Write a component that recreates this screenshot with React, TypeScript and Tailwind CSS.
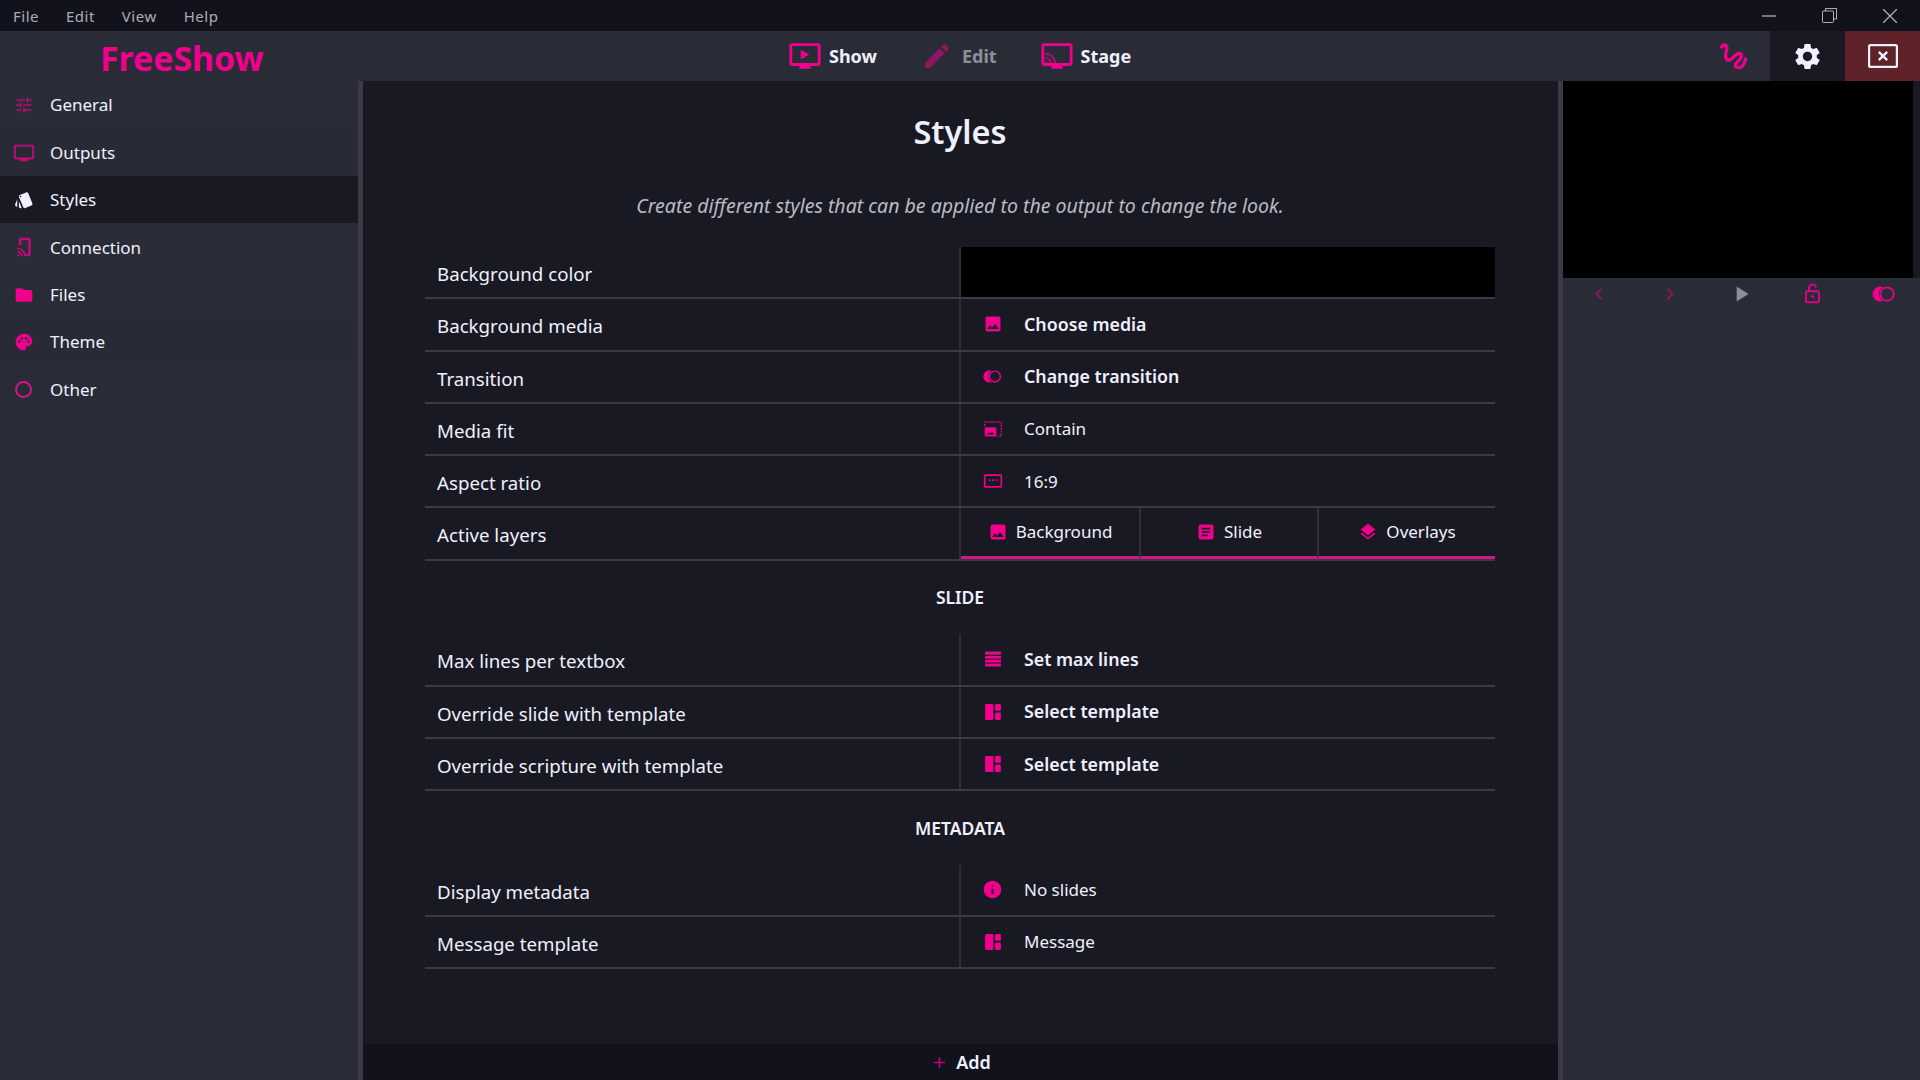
import type { ReactNode } from 'react';
import {
  MdTune, MdStyle, MdFolder, MdPalette, MdSettings, MdImage, MdArticle, MdLayers, MdInfo,
  MdChevronLeft, MdChevronRight, MdPlayArrow, MdEdit, MdAdd,
} from 'react-icons/md';

// iconos que no estan en el paquete, dibujados a mano
const TvIcon = ({ size = 24 }: { size?: number }) => (
  <svg width={size} height={size} viewBox="0 0 24 24" fill="currentColor">
    <path d="M21 3H3a2 2 0 0 0-2 2v12a2 2 0 0 0 2 2h5v2h8v-2h5a2 2 0 0 0 2-2V5a2 2 0 0 0-2-2zm0 14H3V5h18v12z" />
  </svg>
);

const ShowIcon = ({ size = 30 }: { size?: number }) => (
  <svg width={size} height={size} viewBox="0 0 24 24" fill="currentColor">
    <path d="M21 3H3a2 2 0 0 0-2 2v12a2 2 0 0 0 2 2h5v2h8v-2h5a2 2 0 0 0 2-2V5a2 2 0 0 0-2-2zm0 14H3V5h18v12z" />
    <path d="M9 7.5v7l6-3.5z" />
  </svg>
);

const StageIcon = ({ size = 30 }: { size?: number }) => (
  <svg width={size} height={size} viewBox="0 0 24 24" fill="currentColor">
    <path d="M21 3H3a2 2 0 0 0-2 2v12a2 2 0 0 0 2 2h5v2h8v-2h5a2 2 0 0 0 2-2V5a2 2 0 0 0-2-2zm0 14H3V5h18v12z" />
    <g opacity="0.6">
      <path d="M3.5 15.500v2h2a2 2 0 0 0-2-2z" />
      <path d="M3.500 12.500V14a3.500 3.500 0 0 1 3.500 3.500h1.500a5 5 0 0 0-5-5z" />
      <path d="M3.500 9.500V11a6.500 6.500 0 0 1 6.500 6.500h1.500a8 8 0 0 0-8-8z" />
    </g>
  </svg>
);

const ConnectionIcon = ({ size = 20 }: { size?: number }) => (
  <svg width={size} height={size} viewBox="0 0 24 24" fill="currentColor">
    <path d="M8 1h10a2 2 0 0 1 2 2v18a2 2 0 0 1-2 2h-4v-2.800h3.200V3.800H8.800V10H6V3a2 2 0 0 1 2-2z" />
    <path d="M4 20.500a2 2 0 0 1 2 2.500H4z" />
    <path d="M4 16.500a6 6 0 0 1 6 6.500H8a4 4 0 0 0-4-4.500z" />
    <path d="M4 12.500A10 10 0 0 1 14 23h-2a8 8 0 0 0-8-8.500z" />
  </svg>
);

const TransitionIcon = ({ size = 20 }: { size?: number }) => (
  <svg width={size} height={size} viewBox="0 0 24 24" fill="currentColor">
    <path d="M11.070 5.490A7 7 0 1 0 11.070 18.510A7.500 7.500 0 0 1 11.070 5.490z" />
    <circle cx="14.800" cy="12" r="6.200" fill="none" stroke="currentColor" strokeWidth="1.600" />
  </svg>
);

const ContainIcon = ({ size = 20 }: { size?: number }) => (
  <svg width={size} height={size} viewBox="0 0 24 24" fill="currentColor">
    <path d="M2 8V3.500H22V20.500H17.500" fill="none" stroke="currentColor" strokeWidth="1.800" strokeDasharray="2 1.500" />
    <path fillRule="evenodd" d="M2 10h14v11H2zm2.500 8.500h9l-2.700-3.500-2.200 2.600-1.600-1.500z" />
  </svg>
);

const RatioIcon = ({ size = 20 }: { size?: number }) => (
  <svg width={size} height={size} viewBox="0 0 24 24" fill="currentColor">
    <path d="M21 4H3a2 2 0 0 0-2 2v12a2 2 0 0 0 2 2h18a2 2 0 0 0 2-2V6a2 2 0 0 0-2-2zm0 14H3V6h18v12z" />
    <path d="M7 10h2v2H7zM11 10h2v2h-2zM15 10h2v2h-2z" />
  </svg>
);

const LinesIcon = ({ size = 20 }: { size?: number }) => (
  <svg width={size} height={size} viewBox="0 0 24 24" fill="currentColor">
    <path d="M2.500 3h19v4h-19zM2.500 8.500h19v3.200h-19zM2.500 13h19v3.200h-19zM2.500 17.500h19v3.500h-19z" />
  </svg>
);

const TemplateIcon = ({ size = 20 }: { size?: number }) => (
  <svg width={size} height={size} viewBox="0 0 24 24" fill="currentColor">
    <rect x="2.500" y="2.500" width="10" height="19" rx="1.500" />
    <rect x="14.500" y="2.500" width="7" height="8" rx="1.500" />
    <rect x="14.500" y="12.500" width="7" height="9" rx="1.500" />
  </svg>
);

const LockOpenIcon = ({ size = 22 }: { size?: number }) => (
  <svg width={size} height={size} viewBox="0 0 24 24" fill="none" stroke="currentColor" strokeWidth="2.200">
    <rect x="4.500" y="9.500" width="15" height="12.500" rx="1.500" />
    <path d="M8 9.500V6a4 4 0 0 1 8-.5" />
    <circle cx="12" cy="15.700" r="1.600" fill="currentColor" stroke="none" />
  </svg>
);

const DrawIcon = () => (
  <svg width="42" height="40" viewBox="0 0 42 40" fill="none" stroke="currentColor" strokeWidth="3.300" strokeLinecap="round" strokeLinejoin="round">
    <path d="M9.500 11C12 7.500 16 9 14.500 14 13 18 13 24 16.500 24 20 24 23 18 27 17.500 31 17 29.500 23 26 25.500 21.500 29 23 32 28 31.500 31 31 33 26 33.500 23" />
  </svg>
);

const CloseScreenIcon = () => (
  <svg width="30" height="24" viewBox="0 0 30 24" fill="none" stroke="currentColor" strokeWidth="2.200">
    <rect x="1.100" y="1.100" width="27.800" height="21.800" rx="1.500" />
    <path d="M10.800 7.800l8.400 8.400M19.200 7.800l-8.400 8.400" strokeWidth="2.400" />
  </svg>
);

const sideItems: { label: string; icon: ReactNode; bg: string }[] = [
  { label: 'General', icon: <span className="opacity-70"><MdTune size={20} /></span>, bg: 'bg-[#2a2d37]' },
  { label: 'Outputs', icon: <span className="opacity-80 -ml-px"><TvIcon size={22} /></span>, bg: 'bg-[#282b35]' },
  { label: 'Styles', icon: <span className="text-[#f0f0ff]"><MdStyle size={20} /></span>, bg: 'bg-[#191923]' },
  { label: 'Connection', icon: <span className="opacity-80"><ConnectionIcon size={20} /></span>, bg: 'bg-[#2a2d37]' },
  { label: 'Files', icon: <MdFolder size={20} />, bg: 'bg-[#292c36]' },
  { label: 'Theme', icon: <MdPalette size={20} />, bg: 'bg-[#282b35]' },
  { label: 'Other', icon: <span className="block ml-px w-[17px] h-[17px] rounded-full border-2 border-[#d4148a]" />, bg: 'bg-[#292c36]' },
];

const Row = ({ label, icon, value, bold }: { label: string; icon: ReactNode; value: string; bold?: boolean }) => (
  <div className="flex h-[52.3px] border-b-2 border-[#383a44]">
    <div className="w-[534px] flex items-center pl-3 pt-1 text-[18.700px] text-[#f0f0ff]">{label}</div>
    <div className="flex-1 flex items-center border-l-2 border-[#2d2f39]">
      <span className="w-[63px] flex justify-center text-[#f0008c]">{icon}</span>
      <span className={bold ? 'text-[17.800px] font-semibold text-[#f0f0ff]' : 'text-[17px] text-[#f0f0ff]'}>{value}</span>
    </div>
  </div>
);

const Heading = ({ children }: { children: string }) => (
  <div className="h-[73.500px] flex items-center justify-center text-[17.500px] font-semibold text-[#f0f0ff]">{children}</div>
);

export default function App() {
  return (
    <div className="h-screen w-full overflow-hidden flex flex-col bg-[#191923] text-[#f0f0ff] font-['Noto_Sans',sans-serif]">
      {/* barra de menu con los botones de la ventana */}
      <div className="h-[31px] flex items-center justify-between bg-[#12121c] text-[15px] text-[#f0f0ff]/70">
        <div className="flex gap-[27px] pl-[13px] pt-0.5 tracking-[0.5px]">
          <span>File</span>
          <span>Edit</span>
          <span>View</span>
          <span>Help</span>
        </div>
        <div className="flex items-center gap-[46px] pr-[23px] text-[#f0f0ff]/70">
          <svg width="14" height="14" viewBox="0 0 14 14" stroke="currentColor" strokeWidth="1.300"><path d="M0 7h14" /></svg>
          <svg width="15" height="15" viewBox="0 0 15 15" fill="none" stroke="currentColor" strokeWidth="1"><rect x="0.500" y="3" width="11" height="11.500" rx="1" /><path d="M3.500 3V.5h11V11H12" /></svg>
          <svg width="14" height="14" viewBox="0 0 14 14" stroke="currentColor" strokeWidth="1.300"><path d="M0 0l14 14M14 0L0 14" /></svg>
        </div>
      </div>

      {/* cabecera: logo, pestañas y acciones */}
      <div className="h-[50px] flex items-stretch bg-[#292c36]">
        <div className="w-[363px] flex items-center pl-[100px] pt-1 text-[34px] font-bold tracking-[-0.1px] text-[#f0008c]">FreeShow</div>
        <div className="flex-1 flex items-center pl-[425px] text-[18px] font-bold">
          <div className="flex items-center gap-[7px] text-[#f0f0ff]">
            <span className="text-[#f0008c]"><ShowIcon size={34} /></span>
            <span>Show</span>
          </div>
          <div className="flex items-center gap-[9px] ml-[44px] opacity-50">
            <span className="text-[#f0008c]"><MdEdit size={32} /></span>
            <span>Edit</span>
          </div>
          <div className="flex items-center gap-[7px] ml-[43px]">
            <span className="text-[#f0008c]"><StageIcon size={34} /></span>
            <span>Stage</span>
          </div>
        </div>
        <div className="w-[75px] flex items-center justify-center text-[#f0008c]"><DrawIcon /></div>
        <div className="w-[75px] flex items-center justify-center bg-[#191923]"><MdSettings size={31} /></div>
        <div className="w-[75px] flex items-center justify-center bg-[#5f2229]"><CloseScreenIcon /></div>
      </div>

      <div className="flex-1 min-h-0 flex">
        {/* lista lateral de ajustes */}
        <div className="w-[358px] bg-[#292c36] text-[17px] text-[#f0f0ff]">
          {sideItems.map(item => (
            <div key={item.label} className={`h-[47.400px] flex items-center pt-px ${item.bg}`}>
              <span className="w-[50px] pl-[14px] text-[#f0008c] flex items-center">{item.icon}</span>
              <span>{item.label}</span>
            </div>
          ))}
        </div>
        <div className="w-[5px] bg-[#393c46]" />

        {/* contenido principal */}
        <div className="flex-1 flex flex-col min-w-0">
          <div className="flex-1 pl-[62px] pr-[63px]">
            <div className="h-[102px] flex items-center justify-center text-[32.500px] font-semibold text-[#f0f0ff]">Styles</div>
            <div className="h-[44px] mb-[20px] flex items-center justify-center pt-0.5 text-[19.500px] italic text-[#f0f0ff]/75">
              Create different styles that can be applied to the output to change the look.
            </div>

            <div className="flex h-[52.3px] border-b-2 border-[#383a44]">
              <div className="w-[534px] flex items-center pl-3 pt-1 text-[18.700px]">Background color</div>
              <div className="flex-1 bg-black border-l-2 border-[#2d2f39]" />
            </div>
            <Row label="Background media" icon={<MdImage size={20} />} value="Choose media" bold />
            <Row label="Transition" icon={<TransitionIcon size={21} />} value="Change transition" bold />
            <Row label="Media fit" icon={<ContainIcon size={20} />} value="Contain" />
            <Row label="Aspect ratio" icon={<RatioIcon size={20} />} value="16:9" />
            <div className="flex h-[52.3px] border-b-2 border-[#383a44]">
              <div className="w-[534px] flex items-center pl-3 pt-0.5 text-[18.700px]">Active layers</div>
              <div className="flex-1 grid grid-cols-3 border-l-2 border-[#2d2f39] text-[17px]">
                <div className="flex items-center justify-center gap-[8px] border-b-[3px] border-[#d4148a]">
                  <span className="text-[#f0008c]"><MdImage size={20} /></span>Background
                </div>
                <div className="flex items-center justify-center gap-[8px] border-b-[3px] border-l-2 border-b-[#d4148a] border-l-[#2d2f39]">
                  <span className="text-[#f0008c]"><MdArticle size={20} /></span>Slide
                </div>
                <div className="flex items-center justify-center gap-[8px] border-b-[3px] border-l-2 border-b-[#d4148a] border-l-[#2d2f39]">
                  <span className="text-[#f0008c]"><MdLayers size={20} /></span>Overlays
                </div>
              </div>
            </div>

            <Heading>SLIDE</Heading>
            <Row label="Max lines per textbox" icon={<LinesIcon size={20} />} value="Set max lines" bold />
            <Row label="Override slide with template" icon={<TemplateIcon size={20} />} value="Select template" bold />
            <Row label="Override scripture with template" icon={<TemplateIcon size={20} />} value="Select template" bold />

            <Heading>METADATA</Heading>
            <Row label="Display metadata" icon={<MdInfo size={21} />} value="No slides" />
            <Row label="Message template" icon={<TemplateIcon size={20} />} value="Message" />
          </div>
          <div className="h-[36px] flex items-center justify-center gap-[7px] bg-[#12121c] text-[18px] font-semibold">
            <span className="text-[#f0008c] opacity-80"><MdAdd size={19} /></span>
            <span>Add</span>
          </div>
        </div>
        <div className="w-[5px] bg-[#393c46]" />

        {/* panel derecho con la vista previa */}
        <div className="w-[357px] bg-[#292c36] flex flex-col">
          <div className="h-[197px] flex bg-[#191923]">
            <div className="w-[350px] bg-black" />
          </div>
          <div className="h-[31px] grid grid-cols-5 items-center justify-items-center text-[#f0008c]">
            <span className="opacity-50"><MdChevronLeft size={24} /></span>
            <span className="opacity-50"><MdChevronRight size={24} /></span>
            <span className="text-[#f0f0ff]/50"><MdPlayArrow size={26} /></span>
            <span className="opacity-90"><LockOpenIcon size={21} /></span>
            <TransitionIcon size={26} />
          </div>
        </div>
      </div>
    </div>
  );
}
